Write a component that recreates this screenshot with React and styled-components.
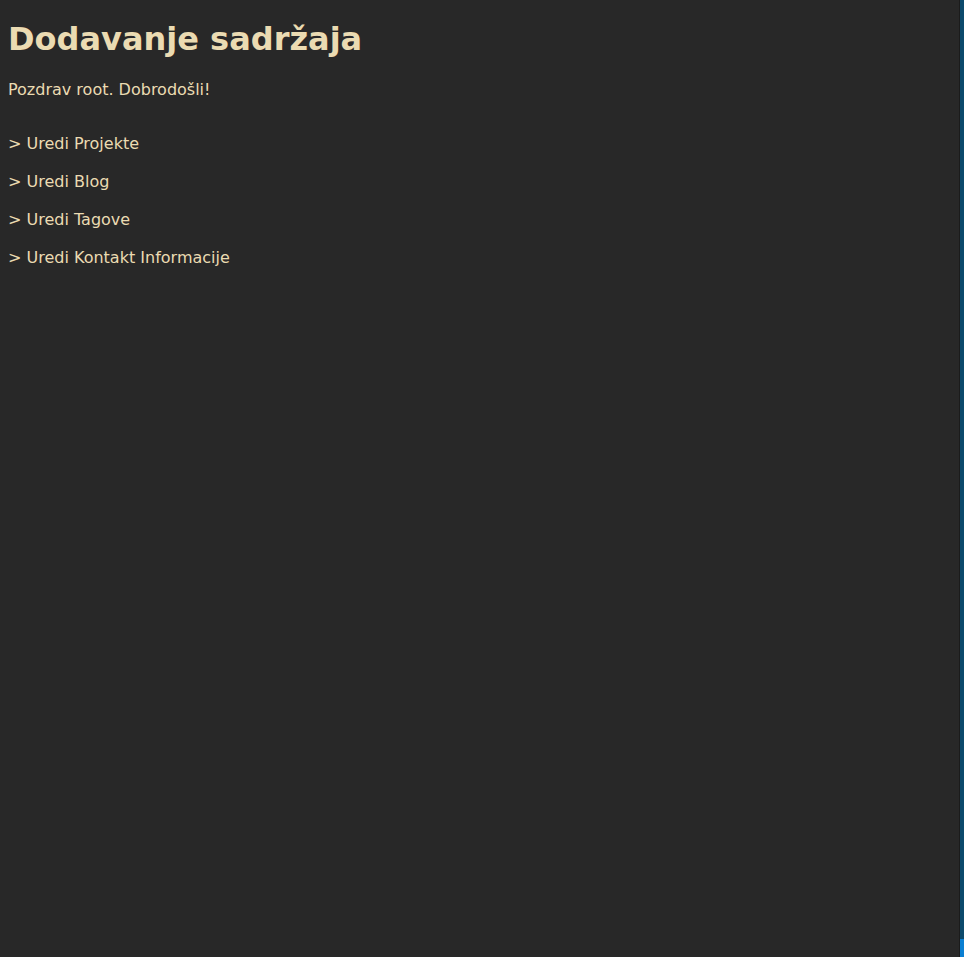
import styled, { createGlobalStyle } from "styled-components";

const GlobalStyle = createGlobalStyle`
  html, body {
    margin: 0;
    background: #282828;
  }
  body {
    font-family: "DejaVu Sans", sans-serif;
    color: #ebdbb2;
    min-height: 100vh;
  }
`;

const links = [
  "Uredi Projekte",
  "Uredi Blog",
  "Uredi Tagove",
  "Uredi Kontakt Informacije",
];

export default function App() {
  return (
    <>
      <GlobalStyle />
      <Page>
        <Title>Dodavanje sadržaja</Title>
        <Greeting>Pozdrav root. Dobrodošli!</Greeting>
        <Nav>
          {links.map((label) => (
            <NavLink key={label} href="#">
              &gt; {label}
            </NavLink>
          ))}
        </Nav>
      </Page>
      <ScrollTrack>
        <ScrollThumb />
      </ScrollTrack>
    </>
  );
}

const Page = styled.main`
  padding: 0 8px;
`;

const Title = styled.h1`
  font-size: 32px;
  font-weight: bold;
  margin: 20.4px 0 21.4px;
`;

const Greeting = styled.p`
  font-size: 16px;
  margin: 0;
`;

const Nav = styled.nav`
  display: flex;
  flex-direction: column;
  align-items: flex-start;
  gap: 19.2px;
  margin-top: 35px;
`;

const NavLink = styled.a`
  color: #ebdbb2;
  font-size: 16px;
  text-decoration: none;
`;

const ScrollTrack = styled.div`
  position: fixed;
  top: 0;
  right: 0;
  bottom: 0;
  width: 4px;
  background: #0c4a6c;
  border-left: 1px solid #1b1b1b;
  display: flex;
  flex-direction: column;
  justify-content: flex-end;
`;

const ScrollThumb = styled.div`
  height: 18px;
  background: #0a7fd2;
`;
